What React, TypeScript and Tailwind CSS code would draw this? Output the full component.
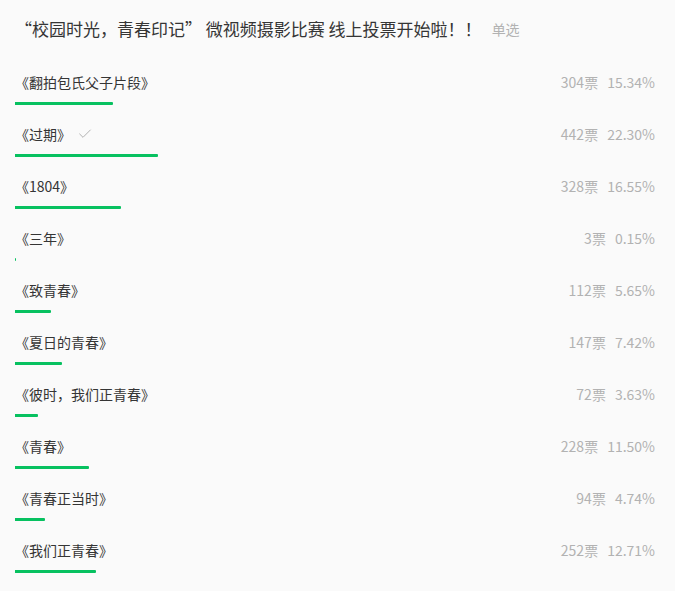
import { Check } from 'lucide-react'

type Option = {
  name: string
  votes: number
  percent: string
  checked?: boolean
}

/* ================= DATA ================= */
const options: Option[] = [
  { name: '《翻拍包氏父子片段》', votes: 304, percent: '15.34%' },
  { name: '《过期》', votes: 442, percent: '22.30%', checked: true },
  { name: '《1804》', votes: 328, percent: '16.55%' },
  { name: '《三年》', votes: 3, percent: '0.15%' },
  { name: '《致青春》', votes: 112, percent: '5.65%' },
  { name: '《夏日的青春》', votes: 147, percent: '7.42%' },
  { name: '《彼时，我们正青春》', votes: 72, percent: '3.63%' },
  { name: '《青春》', votes: 228, percent: '11.50%' },
  { name: '《青春正当时》', votes: 94, percent: '4.74%' },
  { name: '《我们正青春》', votes: 252, percent: '12.71%' },
]

/* ================= COMPONENT ================= */
export default function App() {
  return (
    <div
      className="min-h-[591px] w-[675px] bg-[#fafafa] pl-[15px] pr-[20px] pt-[17px]"
      style={{ fontFamily: '"Noto Sans CJK SC", "Noto Sans", sans-serif' }}
    >
      {/* TITLE */}
      <div className="flex items-center leading-[24px]">
        <span className="text-[17px] text-[#353535]">
          “校园时光，青春印记” 微视频摄影比赛 线上投票开始啦！！
        </span>
        <span className="ml-[10px] text-[14px] text-[#b2b2b2]">单选</span>
      </div>

      {/* OPTIONS */}
      <div className="mt-[31px] flex flex-col">
        {options.map((o) => (
          <div key={o.name} className="pb-[19px]">
            <div className="flex items-center justify-between text-[14px] leading-[20px]">
              <div className="flex items-center text-[#353535]">
                <span>{o.name}</span>
                {o.checked && (
                  <Check className="ml-[6px] h-[16px] w-[16px] text-[#b2b2b2]" strokeWidth={1.5} />
                )}
              </div>
              <div className="flex gap-[9px] text-[#b2b2b2]">
                <span>{o.votes}票</span>
                <span>{o.percent}</span>
              </div>
            </div>
            <div className="mt-[10px] h-[3px] w-full">
              <div
                className="h-full rounded-r-[1px] bg-[#07c160]"
                style={{ width: o.percent }}
              />
            </div>
          </div>
        ))}
      </div>
    </div>
  )
}
